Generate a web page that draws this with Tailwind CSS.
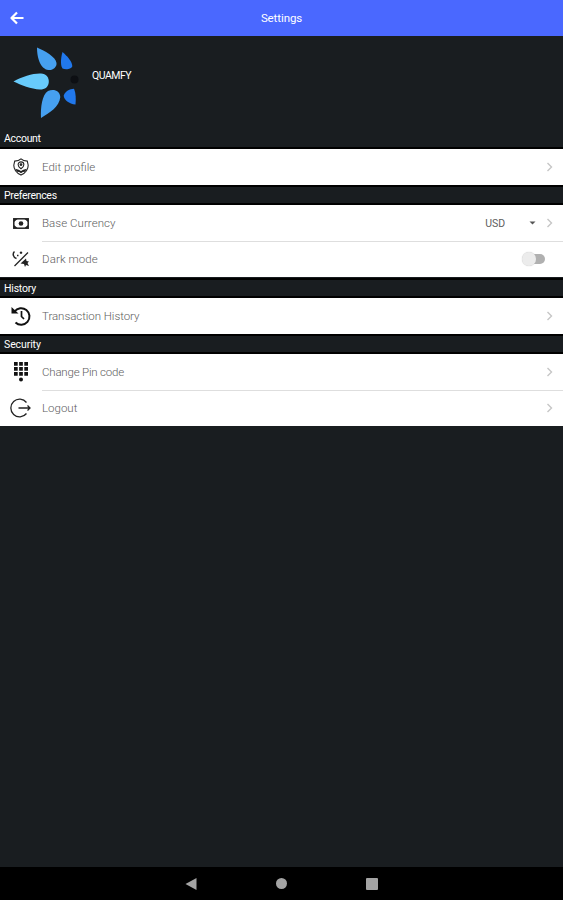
<!DOCTYPE html>
<html lang="en">
<head>
    <meta charset="UTF-8">
    <meta name="viewport" content="width=device-width, initial-scale=1.0">
    <title>Settings</title>
    <script src="https://cdn.jsdelivr.net/npm/@tailwindcss/browser@4"></script>
</head>
<body class="bg-[#191d20] font-['Roboto','Liberation_Sans',sans-serif] text-[11px] leading-none">
    <div class="flex flex-col h-screen overflow-hidden">
        <header class="grid grid-cols-[1fr_auto_1fr] items-center h-9 shrink-0 bg-[#4a68ff] text-white">
            <svg class="ml-[10px] w-[14px] h-[14px]" viewBox="0 0 14 14" fill="none" stroke="currentColor" stroke-width="2.2" stroke-linejoin="round">
                <path d="M13.5 7H2M7 1.5L1.5 7L7 12.5"/>
            </svg>
            <h1 class="pt-0.5 text-[11.5px] tracking-[-0.1px]">Settings</h1>
        </header>

        <div class="flex items-start h-[94px] shrink-0 text-white">
            <svg class="w-[92px] h-[94px] shrink-0" viewBox="0 36 92 94">
                <path fill="#46a0f0" d="M37 47.5C45 51 56 57 56.5 63C57 67 53 70.500 48.5 70C40 69 37 57 37 47.5Z"/>
                <path fill="#2178ec" d="M62.5 52C67 56 72 61 72.3 66C72 69 66 70 62.5 68.5C60 65 61 57 62.5 52Z"/>
                <path fill="#68cbfb" d="M13.5 81.5C22 76.5 34 73 41 73.5C46 74 49 77 48.8 82C48.5 87 45 89.5 40 89.500C31 89 21 85 13.5 81.5Z"/>
                <path fill="#46a0f0" d="M41 118C40.5 107 42 95 48 91C54 88.5 60 91 60.3 97C59.5 107 49 113 41 118Z"/>
                <path fill="#2178ec" d="M75.5 104.5C69 104 64 100 63.7 95.5C65 91 70 89 74 88.7C76 93 76 99 75.5 104.5Z"/>
                <circle cx="74.500" cy="79.5" r="4" fill="#0d0f13"/>
            </svg>
            <span class="pt-[35px] text-[10.5px] tracking-[-0.5px]">QUAMFY</span>
        </div>

        <h2 class="flex items-center h-[19px] shrink-0 px-1 pt-0.5 border-b-2 border-black text-white text-[10.5px] tracking-[-0.3px]">Account</h2>
        <div class="bg-white text-[#606060] font-light">
            <div class="flex items-center h-9">
                <svg class="ml-3 w-[18px] h-[18px] text-[#222]" viewBox="0 0 18 20" fill="none" stroke="currentColor" stroke-width="1.2">
                    <path d="M9 1C7 3 4.500 3.5 2 3.5L1 8C1 13 5 17 9 19C13 17 17 13 17 8L16 3.5C13.5 3.5 11 3 9 1Z"/>
                    <path d="M9 12C7 10.500 5.800 9 5.800 7.500A3.200 3.200 0 0 1 12.200 7.500C12.200 9 11 10.500 9 12Z"/>
                    <circle cx="9" cy="7.300" r="1" fill="currentColor"/>
                    <path fill="currentColor" stroke="none" d="M2.500 12L6.500 13L9 14.500L11.500 13L15.500 12L13.500 15.200L11 15.500L9 17L7 15.500L4.500 15.200Z"/>
                </svg>
                <span class="ml-3 pt-0.5 text-[11.5px]">Edit profile</span>
                <svg class="ml-auto mr-[10px] w-[7px] h-[10px]" viewBox="0 0 7 10" fill="none" stroke="#c6c6c6" stroke-width="1.4"><path d="M1.5 1L5.5 5L1.5 9"/></svg>
            </div>
        </div>

        <h2 class="flex items-center h-5 shrink-0 px-1 pt-0.5 border-y-2 border-black text-white text-[10.5px] tracking-[-0.3px]">Preferences</h2>
        <div class="bg-white text-[#606060] font-light">
            <div class="flex items-center h-9">
                <svg class="ml-[13px] w-4 h-[11px] text-[#222]" viewBox="0 0 16 11">
                    <rect x="0.8" y="0.8" width="14.4" height="9.4" fill="none" stroke="currentColor" stroke-width="1.5"/>
                    <path fill="currentColor" d="M1 1H4.500L1 4ZM15 1H11.500L15 4ZM1 10H4.500L1 7ZM15 10H11.500L15 7Z"/>
                    <circle cx="8" cy="5.5" r="2.300" fill="currentColor"/>
                </svg>
                <span class="ml-[13px] pt-0.5 text-[11.5px] tracking-[0.05px]">Base Currency</span>
                <span class="ml-auto pt-0.5 text-[10.5px] font-normal tracking-[-0.1px]">USD</span>
                <svg class="ml-6 w-[7px] h-1" viewBox="0 0 7 4"><path fill="#555" d="M0.5 0.5H6.5L3.5 3.5Z"/></svg>
                <svg class="ml-[10px] mr-[10px] w-[7px] h-[10px]" viewBox="0 0 7 10" fill="none" stroke="#c6c6c6" stroke-width="1.4"><path d="M1.5 1L5.5 5L1.5 9"/></svg>
            </div>
            <div class="ml-[42px] -mb-px h-px bg-[#dedede]"></div>
            <div class="flex items-center h-9">
                <svg class="ml-3 w-[18px] h-[18px] text-[#222]" viewBox="0 0 18 18" fill="none" stroke="currentColor" stroke-width="1.3">
                    <path d="M2.500 16L16 2.500"/>
                    <path d="M2.500 1.500C0.300 3.500 1 7.500 4.500 8.500" stroke-width="1.5"/>
                    <path d="M9 1.500V4M7.800 2.700H10.200M5 5.500H6.500"/>
                    <path fill="currentColor" stroke="none" d="M8.500 13.500L14 8.500L14.500 11L17 11.500L15.500 13L17 16L14 15L13 17L12 14Z"/>
                </svg>
                <span class="ml-3 pt-0.5 text-[11.5px] tracking-[0.1px]">Dark mode</span>
                <span class="relative ml-auto mr-[18px] w-[23px] h-[14px]">
                    <span class="absolute right-0 top-[2px] w-[19px] h-[10px] rounded-full bg-[#b0b0b0]"></span>
                    <span class="absolute left-0 top-0 w-[14px] h-[14px] rounded-full bg-[#ececec] shadow-[0_0_1px_#bbb]"></span>
                </span>
            </div>
        </div>

        <h2 class="flex items-center mt-px h-5 shrink-0 px-1 pt-0.5 border-y-2 border-black text-white text-[10.5px] tracking-[-0.2px]">History</h2>
        <div class="bg-white text-[#606060] font-light">
            <div class="flex items-center h-9">
                <svg class="ml-[11px] w-5 h-5 text-[#111]" viewBox="0 0 20 20" fill="none" stroke="currentColor" stroke-width="2">
                    <path d="M3.500 5.500A8.300 8.300 0 1 1 4.500 16.500"/>
                    <path d="M10.500 5V10.5L13 13" stroke-width="1.7"/>
                    <path fill="currentColor" stroke="none" d="M0.500 1V7.500H7.500Z"/>
                </svg>
                <span class="ml-[11px] pt-0.5 text-[11.5px] tracking-[-0.05px]">Transaction History</span>
                <svg class="ml-auto mr-[10px] w-[7px] h-[10px]" viewBox="0 0 7 10" fill="none" stroke="#c6c6c6" stroke-width="1.4"><path d="M1.5 1L5.5 5L1.5 9"/></svg>
            </div>
        </div>

        <h2 class="flex items-center h-5 shrink-0 px-1 pt-0.5 border-y-2 border-black text-white text-[10.5px] tracking-[-0.1px]">Security</h2>
        <div class="bg-white text-[#606060] font-light">
            <div class="flex items-center h-9">
                <svg class="ml-[14px] w-[14px] h-5 text-[#111]" viewBox="0 0 14 20" fill="currentColor">
                    <path d="M0 0H3.7V3.7H0ZM5.15 0H8.85V3.7H5.15ZM10.3 0H14V3.7H10.3ZM0 5H3.7V8.7H0ZM5.15 5H8.85V8.7H5.15ZM10.3 5H14V8.7H10.3ZM0 10H3.7V13.7H0ZM5.15 10H8.85V13.7H5.15ZM10.3 10H14V13.7H10.3Z"/>
                    <circle cx="7" cy="17.5" r="2"/>
                </svg>
                <span class="ml-[14px] pt-0.5 text-[11.5px] tracking-[-0.2px]">Change Pin code</span>
                <svg class="ml-auto mr-[10px] w-[7px] h-[10px]" viewBox="0 0 7 10" fill="none" stroke="#c6c6c6" stroke-width="1.4"><path d="M1.5 1L5.5 5L1.5 9"/></svg>
            </div>
            <div class="ml-[42px] -mb-px h-px bg-[#dedede]"></div>
            <div class="flex items-center h-9">
                <svg class="ml-[10px] w-[21px] h-5 text-[#222]" viewBox="0 0 21 20" fill="none" stroke="currentColor" stroke-width="1.3">
                    <path d="M16.5 4.5A8.8 8.8 0 1 0 16.5 15.5"/>
                    <path d="M8.5 10H20M17.5 7.5L20 10L17.5 12.5"/>
                </svg>
                <span class="ml-[11px] pt-0.5 text-[11.5px]">Logout</span>
                <svg class="ml-auto mr-[10px] w-[7px] h-[10px]" viewBox="0 0 7 10" fill="none" stroke="#c6c6c6" stroke-width="1.4"><path d="M1.5 1L5.5 5L1.5 9"/></svg>
            </div>
        </div>

        <!-- Android navigation bar -->
        <nav class="flex items-center justify-center gap-[79px] mt-auto h-[33px] shrink-0 bg-black">
            <svg class="w-3 h-3" viewBox="0 0 12 12"><path fill="#a4a4a4" d="M0.5 6L11.5 0V12Z"/></svg>
            <span class="w-[11px] h-[11px] rounded-full bg-[#a4a4a4]"></span>
            <span class="w-3 h-3 rounded-[1px] bg-[#a4a4a4]"></span>
        </nav>
    </div>
</body>
</html>
